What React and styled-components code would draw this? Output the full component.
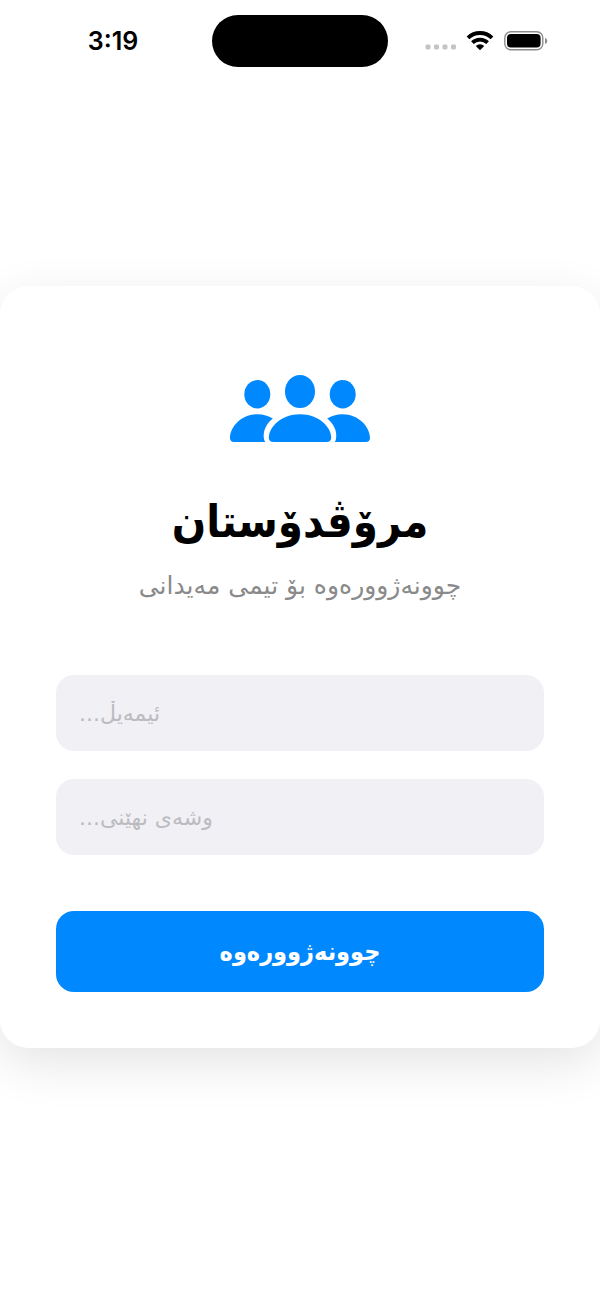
import React, { useState } from "react";
import styled, { createGlobalStyle } from "styled-components";

//Start Styles

const GlobalStyle = createGlobalStyle`
  * {
    box-sizing: border-box;
  }
  body {
    margin: 0;
    background: #ffffff;
    font-family: "DejaVu Sans", sans-serif;
  }
`;

const Screen = styled.div`
  min-height: 100vh;
  display: flex;
  flex-direction: column;
  overflow: hidden;
`;

const StatusBar = styled.header`
  display: grid;
  grid-template-columns: 1fr 176px 1fr;
  align-items: center;
  height: 82px;
`;

const Clock = styled.time`
  justify-self: center;
  margin-left: 14px;
  font: 600 25px/32px Inter, sans-serif;
`;

const Island = styled.div`
  height: 52px;
  border-radius: 26px;
  background: #000000;
`;

const StatusIcons = styled.div`
  display: flex;
  align-items: center;
  justify-content: flex-end;
  gap: 10px;
  padding-right: 52px;
`;

const Main = styled.main`
  flex: 1;
  display: flex;
  flex-direction: column;
  justify-content: center;
  padding-bottom: 47px;
`;

const Card = styled.form`
  display: flex;
  flex-direction: column;
  padding: 88px 56px 56px;
  border-radius: 28px;
  background: #ffffff;
  box-shadow: 0 15px 50px rgba(0, 0, 0, 0.11);
`;

const Logo = styled.svg`
  align-self: center;
  width: 142px;
  height: 68px;
  fill: #0088ff;
`;

const Title = styled.h1`
  margin: 48px 0 0;
  font-family: "DejaVu Sans Condensed", "DejaVu Sans", sans-serif;
  font-size: 45px;
  line-height: 64px;
  font-weight: 700;
  text-align: center;
`;

const Subtitle = styled.p`
  margin: 12px 0 0;
  color: #8a8a8a;
  font-size: 25px;
  line-height: 40px;
  text-align: center;
`;

const Fields = styled.div`
  display: grid;
  gap: 28px;
  margin: 69px 0 56px;
`;

const Input = styled.input`
  width: 100%;
  height: 76px;
  padding: 0 23px;
  border: 0;
  border-radius: 18px;
  background: #f1f0f5;
  color: #000000;
  font-family: inherit;
  font-size: 22px;
  text-align: left;

  &::placeholder {
    color: #bcbbc0;
    opacity: 1;
  }
`;

const SubmitButton = styled.button`
  height: 81px;
  border: 0;
  border-radius: 18px;
  background: #0088ff;
  color: #ffffff;
  font-family: "DejaVu Sans Condensed", "DejaVu Sans", sans-serif;
  font-size: 25px;
  font-weight: 700;
  cursor: pointer;
`;

//End Styles

const SignalDots = () => (
  <svg width="31" height="20" viewBox="0 0 31 20" fill="#c4c4c4">
    <rect x="0.5" y="13.500" width="5" height="5" rx="1.4" />
    <rect x="9" y="13.500" width="5" height="5" rx="1.4" />
    <rect x="17.500" y="13.500" width="5" height="5" rx="1.4" />
    <rect x="26" y="13.500" width="5" height="5" rx="1.4" />
  </svg>
);

const Wifi = () => (
  <svg width="28" height="20" viewBox="0 0 28 20" fill="none">
    <path d="M2 6.900a17.200 17.200 0 0 1 24 0" stroke="#000" strokeWidth="3.8" />
    <path d="M6.400 11.700a10.800 10.800 0 0 1 15.200 0" stroke="#000" strokeWidth="3.8" />
    <path d="M14 19.200l-4.200-4.200a6 6 0 0 1 8.400 0z" fill="#000" />
  </svg>
);

const Battery = () => (
  <svg width="44" height="20" viewBox="0 0 44 20" fill="none">
    <rect x="0.8" y="0.8" width="38" height="18" rx="6" stroke="#8c8c8c" strokeWidth="1.4" />
    <rect x="3" y="3" width="33.600" height="13.600" rx="4" fill="#000" />
    <path d="M41 7c1.400.4 2.200 1.500 2.200 3s-.8 2.600-2.200 3z" fill="#8c8c8c" />
  </svg>
);

const App = () => {
  const [email, setEmail] = useState("");
  const [password, setPassword] = useState("");

  return (
    <Screen>
      <GlobalStyle />
      <StatusBar>
        <Clock>3:19</Clock>
        <Island />
        <StatusIcons>
          <SignalDots />
          <Wifi />
          <Battery />
        </StatusIcons>
      </StatusBar>
      <Main>
        <Card dir="rtl" lang="ckb" onSubmit={(e) => e.preventDefault()}>
          <Logo viewBox="0 0 142 68" aria-hidden="true">
            <ellipse cx="28.300" cy="20.300" rx="13" ry="14.200" />
            <ellipse cx="113.700" cy="20.300" rx="13" ry="14.200" />
            <ellipse cx="71" cy="17.500" rx="15" ry="16.500" />
            <path d="M5 68C2.500 68 1 66.500 1 64C1 53 12 40.200 28.500 40.200C34.500 40.200 39.500 41.800 43.800 44.500C37.500 49.500 33.500 57 35 65C35.300 66.200 35.700 67.200 36.300 68Z" />
            <path d="M137 68C139.500 68 141 66.500 141 64C141 53 130 40.200 113.500 40.200C107.500 40.200 102.500 41.800 98.200 44.500C104.500 49.500 108.500 57 107 65C106.700 66.200 106.300 67.200 105.700 68Z" />
            <path d="M45 68C41.500 68 39.800 66.500 39.800 63.500C39.800 54 51.500 40.300 71 40.300C90.500 40.300 102.200 54 102.200 63.500C102.200 66.500 100.500 68 97 68Z" />
          </Logo>
          <Title>مرۆڤدۆستان</Title>
          <Subtitle>چوونەژوورەوە بۆ تیمی مەیدانی</Subtitle>
          <Fields>
            <Input
              type="email"
              dir="rtl"
              aria-label="ئیمەیڵ"
              placeholder="ئیمەیڵ..."
              value={email}
              onChange={(e) => setEmail(e.target.value)}
            />
            <Input
              type="password"
              dir="rtl"
              aria-label="وشەی نهێنی"
              placeholder="وشەی نهێنی..."
              value={password}
              onChange={(e) => setPassword(e.target.value)}
            />
          </Fields>
          <SubmitButton type="submit">چوونەژوورەوە</SubmitButton>
        </Card>
      </Main>
    </Screen>
  );
};

export default App;
